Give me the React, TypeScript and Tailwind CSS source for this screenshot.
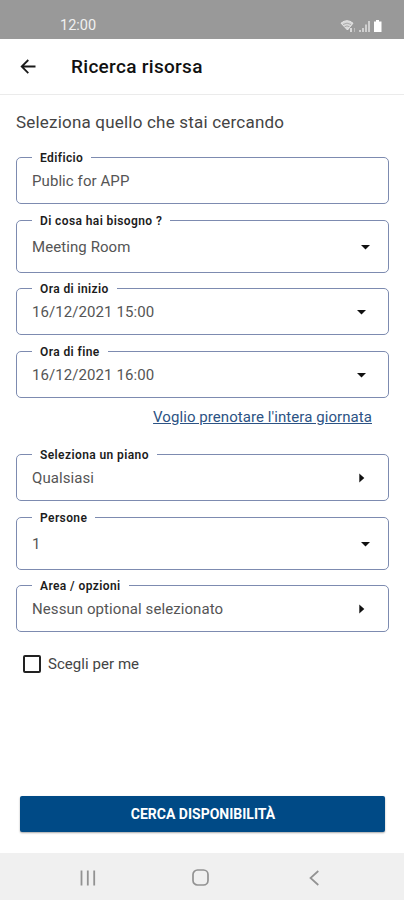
import React from "react";
import clsx from "clsx";

type FieldProps = {
  label: string;
  value: string;
  className: string;
  arrow?: "down" | "right";
  // native pickers sit a little closer to the right border
  select?: boolean;
};

const timeFields: FieldProps[] = [
  {
    label: "Edificio",
    value: "Public for APP",
    className: "h-[55px]",
  },
  {
    label: "Di cosa hai bisogno ?",
    value: "Meeting Room",
    className: "mt-2 h-[61px]",
    arrow: "down",
    select: true,
  },
  {
    label: "Ora di inizio",
    value: "16/12/2021 15:00",
    className: "mt-[7px] h-[55px]",
    arrow: "down",
  },
  {
    label: "Ora di fine",
    value: "16/12/2021 16:00",
    className: "mt-2 h-[55px]",
    arrow: "down",
  },
];

const optionFields: FieldProps[] = [
  {
    label: "Seleziona un piano",
    value: "Qualsiasi",
    className: "h-[55px]",
    arrow: "right",
  },
  {
    label: "Persone",
    value: "1",
    className: "mt-2 h-[61px]",
    arrow: "down",
    select: true,
  },
  {
    label: "Area / opzioni",
    value: "Nessun optional selezionato",
    className: "mt-[7px] h-[55px]",
    arrow: "right",
  },
];

function Arrow({ direction }: { direction: "down" | "right" }) {
  return (
    <svg className="h-3 w-3" viewBox="0 0 12 12" fill="#111111">
      {direction === "down" ? (
        <path d="M2 4h9L6.5 8.600z" />
      ) : (
        <path d="M4.300 1.500v9L9.300 6z" />
      )}
    </svg>
  );
}

function Field({ label, value, className, arrow, select }: FieldProps) {
  return (
    <fieldset
      className={clsx(
        "min-w-0 rounded-[5px] border border-[#7d8bb0]",
        className,
      )}
    >
      <legend className="ml-[15px] h-4 px-2 pt-px text-[12px] leading-4 font-semibold tracking-[0.4px] whitespace-nowrap text-[#1c1c1c]">
        {label}
      </legend>
      <div
        className={clsx(
          "flex items-center justify-between pl-[15px]",
          select ? "h-[38px] pr-[17px]" : "h-8 pr-[21px]",
        )}
      >
        <span className="text-[15px] tracking-[0.08px] text-[#555555]">
          {value}
        </span>
        {arrow && <Arrow direction={arrow} />}
      </div>
    </fieldset>
  );
}

function StatusBar() {
  return (
    <div className="flex h-[39px] items-center justify-between bg-[#999999] pt-3 pr-[21px] pl-[60px]">
      <span className="pt-px text-[14.5px] text-[#f0f0f0]">12:00</span>
      <svg width="43" height="14" viewBox="0 0 43 14" fill="none">
        <path
          d="M1 4.2Q7 -.8 13 4.2L7.5 11z"
          fill="#d8d8d8"
          stroke="#e8e8e8"
        />
        <path d="M3 5.500Q7 2.800 11 5.500M4.500 7.800Q7 6 9.500 7.800" stroke="#aaaaaa" />
        <path d="M11 9v4" stroke="#eeeeee" strokeWidth="1.5" />
        <path d="M14.500 9v4" stroke="#bbbbbb" />
        <path
          d="M20 11v2M23 9v4M26 5.500v7.500M29 2v11"
          stroke="#dddddd"
          strokeWidth="1.6"
        />
        <path d="M36 1h3v1.500h2.500V13h-7.500V2.500h2z" fill="#ffffff" />
      </svg>
    </div>
  );
}

function NavBar() {
  return (
    <div className="flex h-[47px] items-center bg-[#f0f0f0] pt-0.5 pl-[79px]">
      <svg width="18" height="16" viewBox="0 0 18 16" stroke="#929292" strokeWidth="1.8">
        <path d="M2.500 .5v15M8.800 .5v15M15.200 .5v15" />
      </svg>
      <svg className="ml-[94px]" width="19" height="19" viewBox="0 0 19 19" fill="none">
        <rect
          x="2"
          y="2"
          width="15"
          height="15"
          rx="4.500"
          stroke="#929292"
          strokeWidth="1.7"
        />
      </svg>
      <svg className="ml-[98px]" width="12" height="16" viewBox="0 0 12 16" fill="none">
        <path d="M10.300 1L2.500 8l7.800 7" stroke="#929292" strokeWidth="1.7" />
      </svg>
    </div>
  );
}

export default function App() {
  return (
    <div className="flex h-[900px] w-[404px] flex-col bg-white font-['Roboto',sans-serif]">
      <StatusBar />

      <header className="flex h-14 items-center border-b border-[#ebebeb] pl-5">
        <svg width="17" height="16" viewBox="0 0 17 16" fill="none">
          <path
            d="M15.500 7.500H2M8.300 1L1.700 7.500l6.600 6.600"
            stroke="#1a1a1a"
            strokeWidth="1.8"
          />
        </svg>
        <h1 className="ml-[34px] pt-0.5 text-[19px] font-medium tracking-[0.3px] text-[#111111]">
          Ricerca risorsa
        </h1>
      </header>

      <main className="flex flex-1 flex-col px-4">
        <p className="mt-[15px] h-6 text-[17px] leading-6 tracking-[0.2px] whitespace-nowrap text-[#444444]">
          Seleziona quello che stai cercando
        </p>

        <div className="mt-[15px] w-[373px]">
          {timeFields.map((field) => (
            <Field key={field.label} {...field} />
          ))}
        </div>

        <a className="mt-[9px] mr-4 h-5 self-end text-[15px] leading-5 tracking-[0.07px] whitespace-nowrap text-[#2c5384] underline">
          Voglio prenotare l'intera giornata
        </a>

        <div className="mt-[19px] w-[373px]">
          {optionFields.map((field) => (
            <Field key={field.label} {...field} />
          ))}
        </div>

        <label className="mt-[22px] ml-[7px] flex h-5 items-center">
          <span className="h-[18px] w-[18px] rounded-[2px] border-2 border-[#222222]" />
          <span className="ml-[7px] pt-px text-[15px] tracking-[0.05px] text-[#444444]">
            Scegli per me
          </span>
        </label>

        <button className="mt-auto mb-[21px] ml-1 h-9 w-[365px] rounded-[2px] bg-[#004a86] pl-px text-[14px] font-bold text-white shadow-[0_1px_2px_rgba(0,0,0,0.35)]">
          CERCA DISPONIBILITÀ
        </button>
      </main>

      <NavBar />
    </div>
  );
}
